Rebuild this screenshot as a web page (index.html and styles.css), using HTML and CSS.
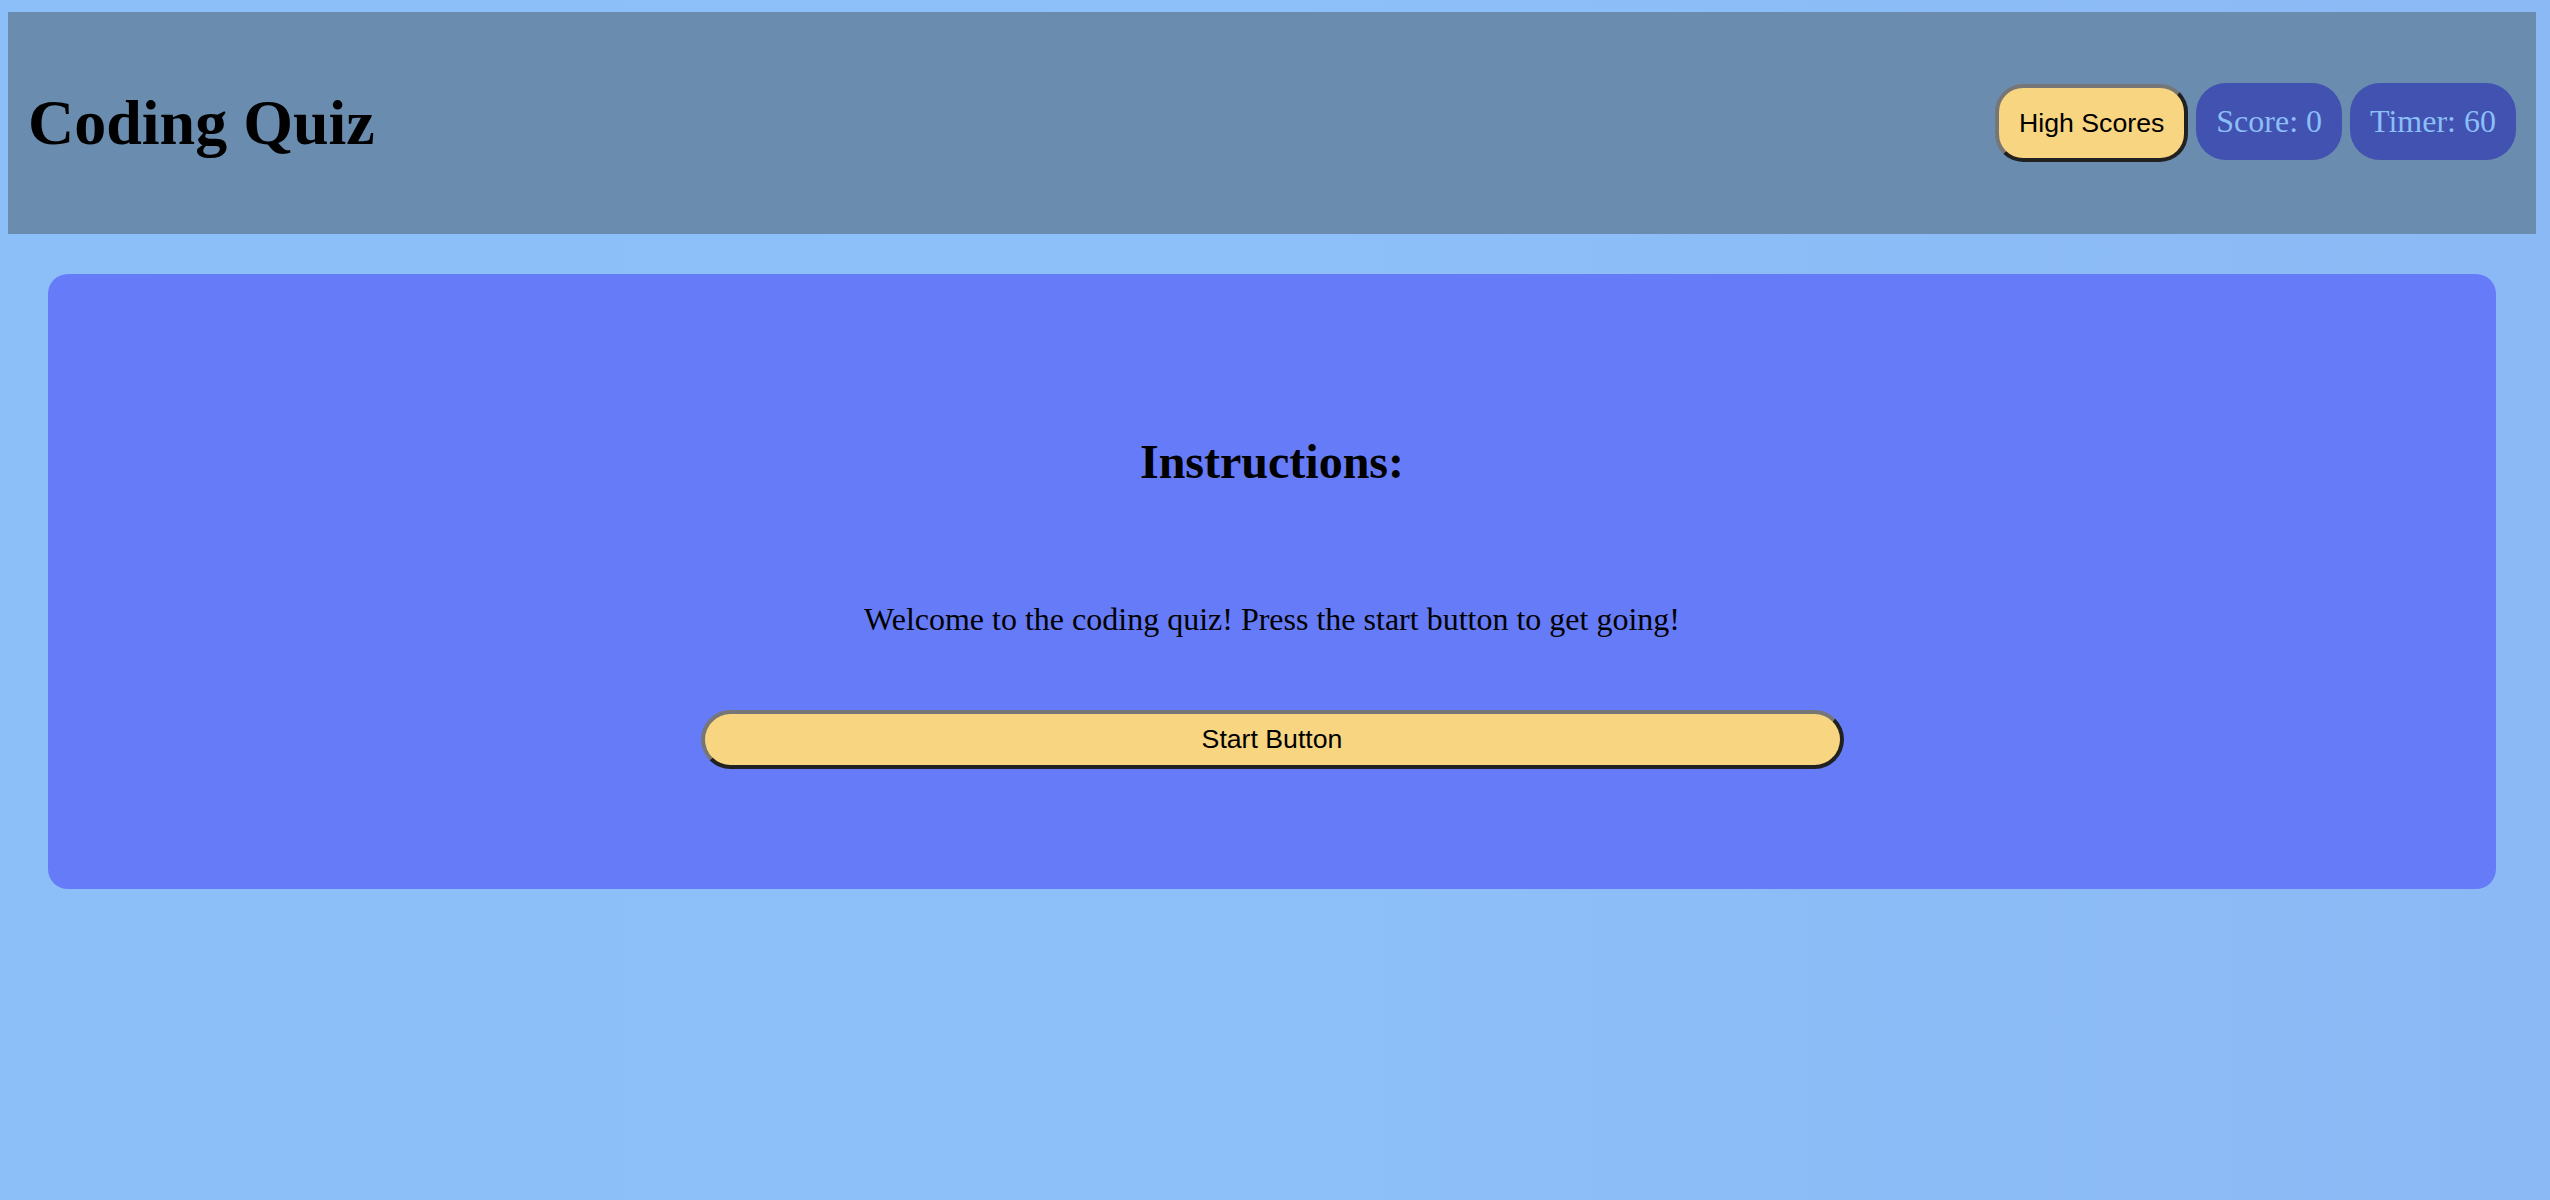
FILE: index.html
```html
<!DOCTYPE html>
<html lang="en">
<head>
<meta charset="utf-8">
<title>Coding Quiz</title>
<link rel="stylesheet" href="styles.css">
</head>
<body>
<header class="top-bar">
  <h1 class="title">Coding Quiz</h1>
  <nav class="stats">
    <button class="pill-btn">High Scores</button>
    <div class="stat">Score: 0</div>
    <div class="stat">Timer: 60</div>
  </nav>
</header>
<main class="card">
  <h2 class="card-title">Instructions:</h2>
  <p class="card-text">Welcome to the coding quiz! Press the start button to get going!</p>
  <button class="start-btn">Start Button</button>
</main>
</body>
</html>
```

FILE: styles.css
```css
html {
  background: linear-gradient(90deg, #8cbef8 0%, #8dbff8 50%, #8bb9f5 100%);
  min-height: 100%;
}

body {
  margin: 12px 14px 0 8px;
  font-family: "Liberation Serif", "Times New Roman", serif;
  font-size: 32px;
  color: #000;
}

.top-bar {
  height: 222px;
  background: #6a8caf;
  display: flex;
  align-items: center;
  justify-content: space-between;
  padding: 0 20px;
  box-sizing: border-box;
}

.title {
  margin: 0;
  font-size: 64px;
  font-weight: bold;
  line-height: 1.15;
}

.stats {
  display: flex;
  align-items: center;
  gap: 8px;
}

.pill-btn,
.start-btn {
  font-family: "Liberation Sans", Arial, Helvetica, sans-serif;
  font-size: 26.67px;
  color: #000;
  background: #f8d580;
  border-width: 4px;
  border-style: solid;
  border-color: #767676 #212121 #212121 #767676;
  cursor: pointer;
  line-height: 1.15;
}

.pill-btn {
  padding: 20px 20px;
  border-radius: 28px;
}

.stat {
  background: #4152b0;
  color: #8cbef8;
  padding: 20px;
  border-radius: 30px;
  line-height: 1.15;
  margin-top: -3px;
}

.card {
  margin: 40px 40px 0;
  background: #667bf7;
  border-radius: 20px;
  padding: 160px 0 120px;
  display: flex;
  flex-direction: column;
  align-items: center;
}

.card-title {
  margin: 0;
  font-size: 48px;
  font-weight: bold;
  line-height: 55px;
}

.card-text {
  margin: 112px 0 0;
  line-height: 37px;
}

.start-btn {
  margin-top: 72px;
  width: 1143px;
  padding: 10px 20px;
  border-radius: 30px;
}
```
